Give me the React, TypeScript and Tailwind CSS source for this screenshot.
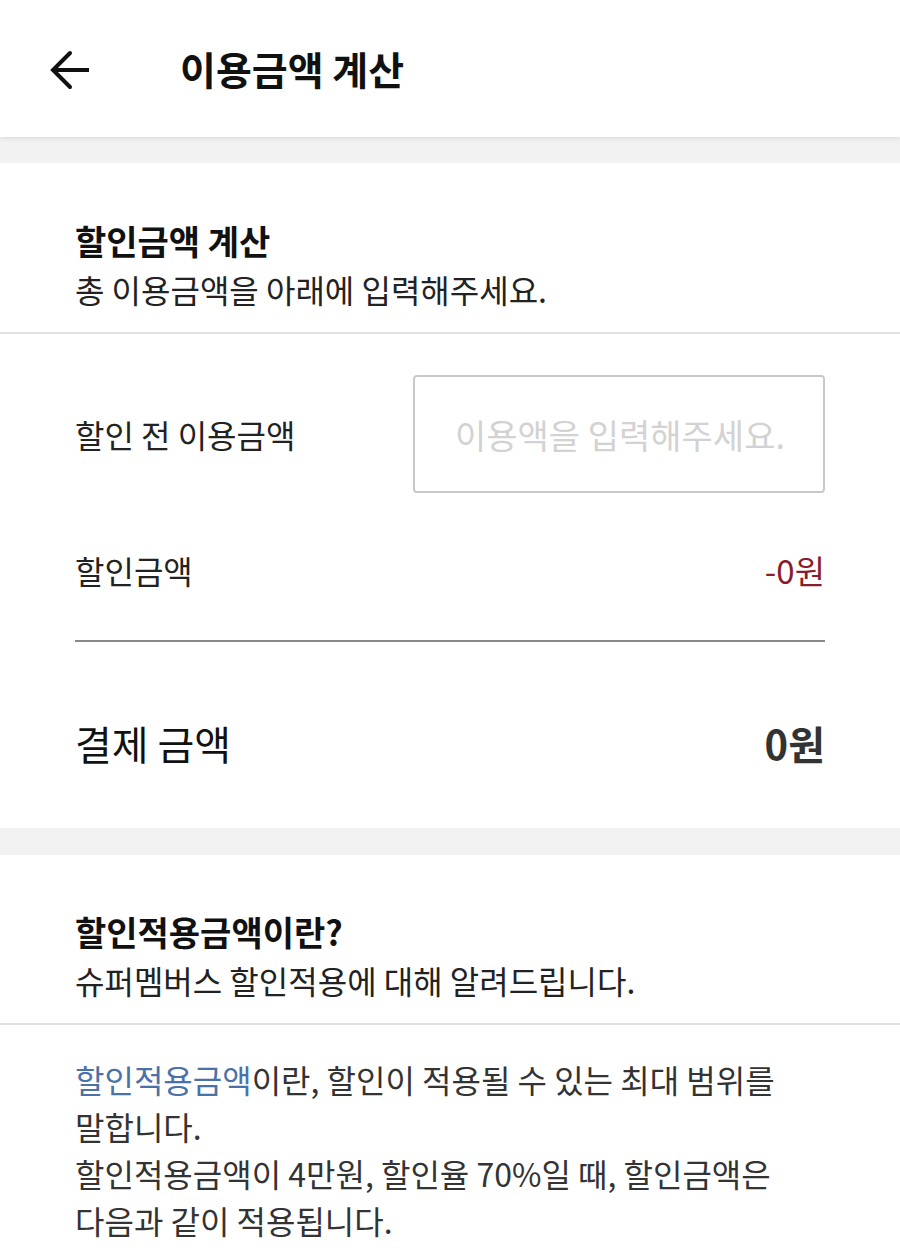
import React from "react";

const BackArrow = () => (
 <svg width="42" height="42" viewBox="0 0 42 42" fill="none" stroke="#111" strokeWidth="4">
  <path d="M40 21H5" />
  <path d="M21 4L4 21l17 17" strokeLinecap="round" />
 </svg>
);

const Header = () => (
 <div className="h-[137px] bg-white flex items-center shadow-[0_2px_4px_rgba(0,0,0,0.08)] relative z-10">
  <button className="ml-[49px] mt-[2px]">
   <BackArrow />
  </button>
  <h1 className="ml-[89px] text-[39px] font-bold text-[#111]">이용금액 계산</h1>
 </div>
);

const SectionTitle = ({ title, desc }: { title: string; desc: string }) => (
 <div className="px-[75px] pb-[19px] border-b-2 border-[#e2e2e2]">
  <h2 className="text-[34px] font-bold text-[#111] leading-[48px]">{title}</h2>
  <p className="text-[32px] text-[#222] leading-[48px]">{desc}</p>
 </div>
);

export default function App() {
 return (
  <div className="min-h-[1255px] flex flex-col bg-[#f2f2f2] font-['Noto_Sans_CJK_KR',sans-serif]">
   <Header />

   {/* calculator */}
   <section className="mt-[26px] bg-white pt-[54px]">
    <SectionTitle title="할인금액 계산" desc="총 이용금액을 아래에 입력해주세요." />
    <div className="px-[75px]">
     <div className="mt-[41px] flex items-center justify-between">
      <span className="text-[32px] text-[#222]">할인 전 이용금액</span>
      <input
       type="text"
       placeholder="이용액을 입력해주세요."
       className="w-[412px] h-[118px] border-2 border-[#c9c9c9] rounded-[4px] px-[40px] text-[34px] placeholder:text-[#d2d2d2] outline-none"
      />
     </div>
     <div className="mt-[53px] flex items-center justify-between leading-[48px] border-b-2 border-[#888] pb-[46px]">
      <span className="text-[32px] text-[#222]">할인금액</span>
      <span className="text-[33px] text-[#8a1c2e]">-0원</span>
     </div>
     <div className="flex items-center justify-between h-[186px] pt-[16px]">
      <span className="text-[40px] text-[#111]">결제 금액</span>
      <span className="text-[40px] font-bold text-[#333]">0원</span>
     </div>
    </div>
   </section>

   {/* explanation */}
   <section className="flex-1 mt-[27px] bg-white pt-[53px] pb-[10px]">
    <SectionTitle title="할인적용금액이란?" desc="슈퍼멤버스 할인적용에 대해 알려드립니다." />
    <div className="px-[75px] pt-[31px] text-[32px] leading-[47px] text-[#333] break-keep">
     <p>
      <span className="text-[#4a72a8]">할인적용금액</span>이란, 할인이 적용될 수 있는 최대 범위를 말합니다.
     </p>
     <p>할인적용금액이 4만원, 할인율 70%일 때, 할인금액은 다음과 같이 적용됩니다.</p>
    </div>
   </section>
  </div>
 );
}
